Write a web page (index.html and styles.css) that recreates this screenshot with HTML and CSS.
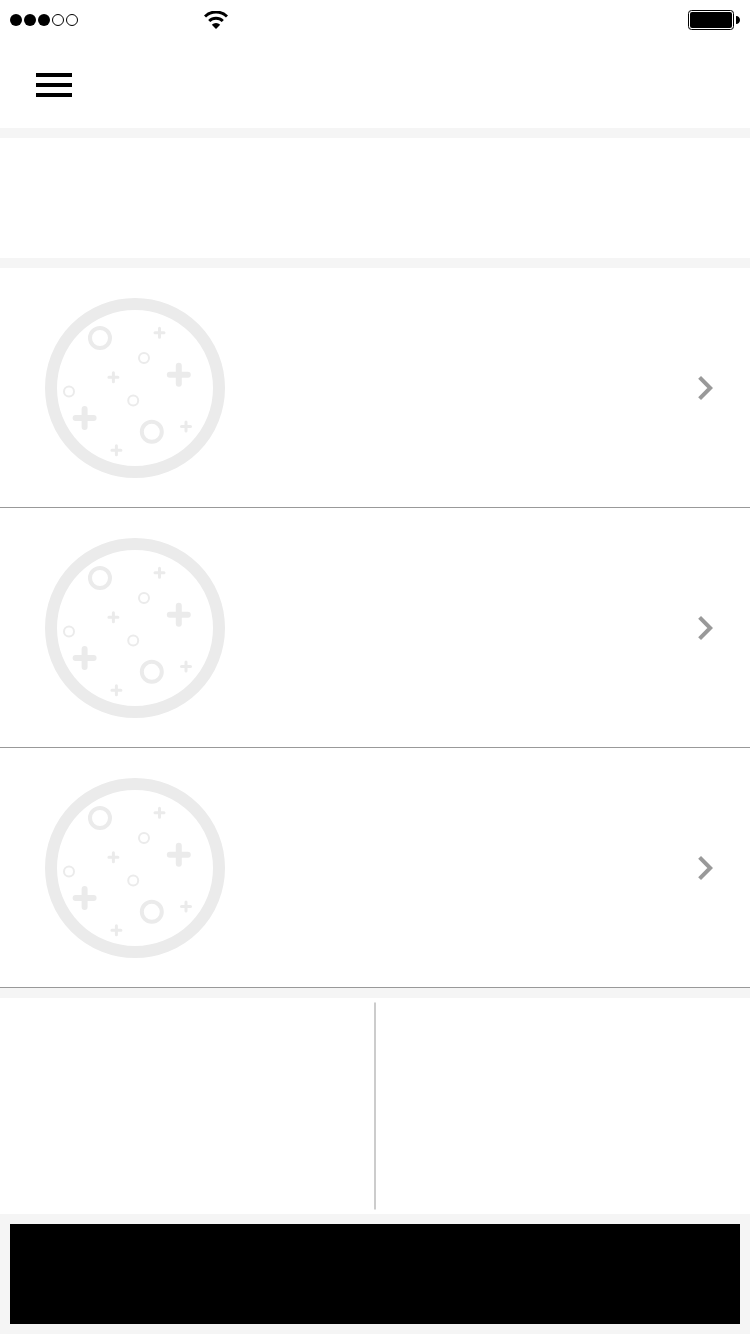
FILE: index.html
```html
<!DOCTYPE html>
<html lang="en">
<head>
<meta charset="utf-8">
<meta name="viewport" content="width=device-width">
<title>Menu</title>
<link rel="stylesheet" href="styles.css">
</head>
<body>
<svg class="defs" aria-hidden="true">
  <symbol id="pizza" viewBox="0 0 180 180">
    <g fill="none" stroke="#ebebeb">
      <circle cx="90" cy="90" r="84" stroke-width="12"/>
      <g stroke-width="4">
        <circle cx="55" cy="40" r="10"/>
        <circle cx="106.8" cy="133.8" r="10"/>
      </g>
      <g stroke-width="2">
        <circle cx="99" cy="59.9" r="5"/>
        <circle cx="24" cy="93.6" r="5"/>
        <circle cx="88.2" cy="102.5" r="5"/>
      </g>
      <g stroke-width="6" stroke-linecap="round">
        <path d="M124.8 76.8h18M133.8 67.8v18"/>
        <path d="M30.6 120h18M39.6 111v18"/>
      </g>
      <g stroke-width="3" stroke-linecap="round">
        <path d="M110 34.7h9M114.5 30.2v9"/>
        <path d="M63.9 79.2h9M68.4 74.7v9"/>
        <path d="M66.9 152.3h9M71.4 147.8v9"/>
        <path d="M136.5 128.4h9M141 123.9v9"/>
      </g>
    </g>
  </symbol>
  <symbol id="chevron" viewBox="0 0 16 26">
    <path d="M2.6 2.4 13.2 13 2.6 23.6" fill="none" stroke="#999" stroke-width="4"/>
  </symbol>
</svg>
<div class="screen">
  <header class="header">
    <div class="status">
      <svg class="signal" width="68" height="12" viewBox="0 0 68 12">
        <circle cx="6" cy="6" r="6"/>
        <circle cx="20" cy="6" r="6"/>
        <circle cx="34" cy="6" r="6"/>
        <g fill="none" stroke="#000">
          <circle cx="48" cy="6" r="5.5"/>
          <circle cx="62" cy="6" r="5.5"/>
        </g>
      </svg>
      <svg class="wifi" width="24" height="18" viewBox="0 0 24 18">
        <g fill="none" stroke="#000" stroke-width="3">
          <path d="M1 5.5a15.8 15.8 0 0 1 22 0"/>
          <path d="M5.2 10a9.8 9.8 0 0 1 13.6 0"/>
        </g>
        <path d="M12 18 7.8 13.8a6 6 0 0 1 8.4 0z"/>
      </svg>
      <svg class="battery" width="52" height="20" viewBox="0 0 52 20">
        <rect x=".5" y=".5" width="45" height="19" rx="3" fill="none" stroke="#000"/>
        <rect x="2" y="2" width="42" height="16" rx="2"/>
        <path d="M48 6c2.6 0 4 1.8 4 4s-1.400 4-4 4z"/>
      </svg>
    </div>
    <button class="menu" aria-label="Menu"><i class="bar"></i><i class="bar"></i><i class="bar"></i></button>
  </header>
  <section class="intro"></section>
  <main class="list">
    <a class="item"><svg class="pizza"><use href="#pizza"/></svg><svg class="chevron"><use href="#chevron"/></svg></a>
    <a class="item"><svg class="pizza"><use href="#pizza"/></svg><svg class="chevron"><use href="#chevron"/></svg></a>
    <a class="item"><svg class="pizza"><use href="#pizza"/></svg><svg class="chevron"><use href="#chevron"/></svg></a>
  </main>
  <section class="summary"><div class="divider"></div></section>
  <footer class="footer"><button class="action" aria-label="Continue"></button></footer>
</div>
</body>
</html>
```

FILE: styles.css
```css
* {
  box-sizing: border-box;
}

body {
  margin: 0;
  font-family: "Liberation Sans", sans-serif;
}

svg {
  display: block;
}

.defs {
  display: none;
}

.screen {
  display: flex;
  flex-direction: column;
  gap: 10px;
  width: 750px;
  height: 1334px;
  background: #f5f5f5;
}

.header {
  height: 128px;
  background: #fff;
}

.status {
  display: flex;
  align-items: center;
  height: 40px;
  padding: 0 10px;
}

.wifi {
  margin-left: 126px;
}

.battery {
  margin-left: auto;
}

.menu {
  display: flex;
  flex-direction: column;
  gap: 6px;
  width: 36px;
  margin: 33px 0 0 36px;
  padding: 0;
  border: 0;
  background: none;
}

.bar {
  width: 36px;
  height: 4px;
  background: #000;
}

.intro {
  height: 120px;
  background: #fff;
}

.list {
  background: #fff;
}

.item {
  display: flex;
  align-items: center;
  justify-content: space-between;
  height: 240px;
  padding: 1px 37px 0 45px;
  border-bottom: 1px solid #999;
}

.pizza {
  width: 180px;
  height: 180px;
}

.chevron {
  width: 16px;
  height: 26px;
}

.summary {
  display: flex;
  justify-content: center;
  height: 216px;
  padding: 4px 0;
  background: #fff;
}

.divider {
  width: 2px;
  background: linear-gradient(#e5e5e5 1px, #ccc 1px calc(100% - 1px), #e5e5e5 calc(100% - 1px));
}

.footer {
  padding: 0 10px;
}

.action {
  display: block;
  width: 100%;
  height: 100px;
  border: 0;
  background: #000;
}
```
